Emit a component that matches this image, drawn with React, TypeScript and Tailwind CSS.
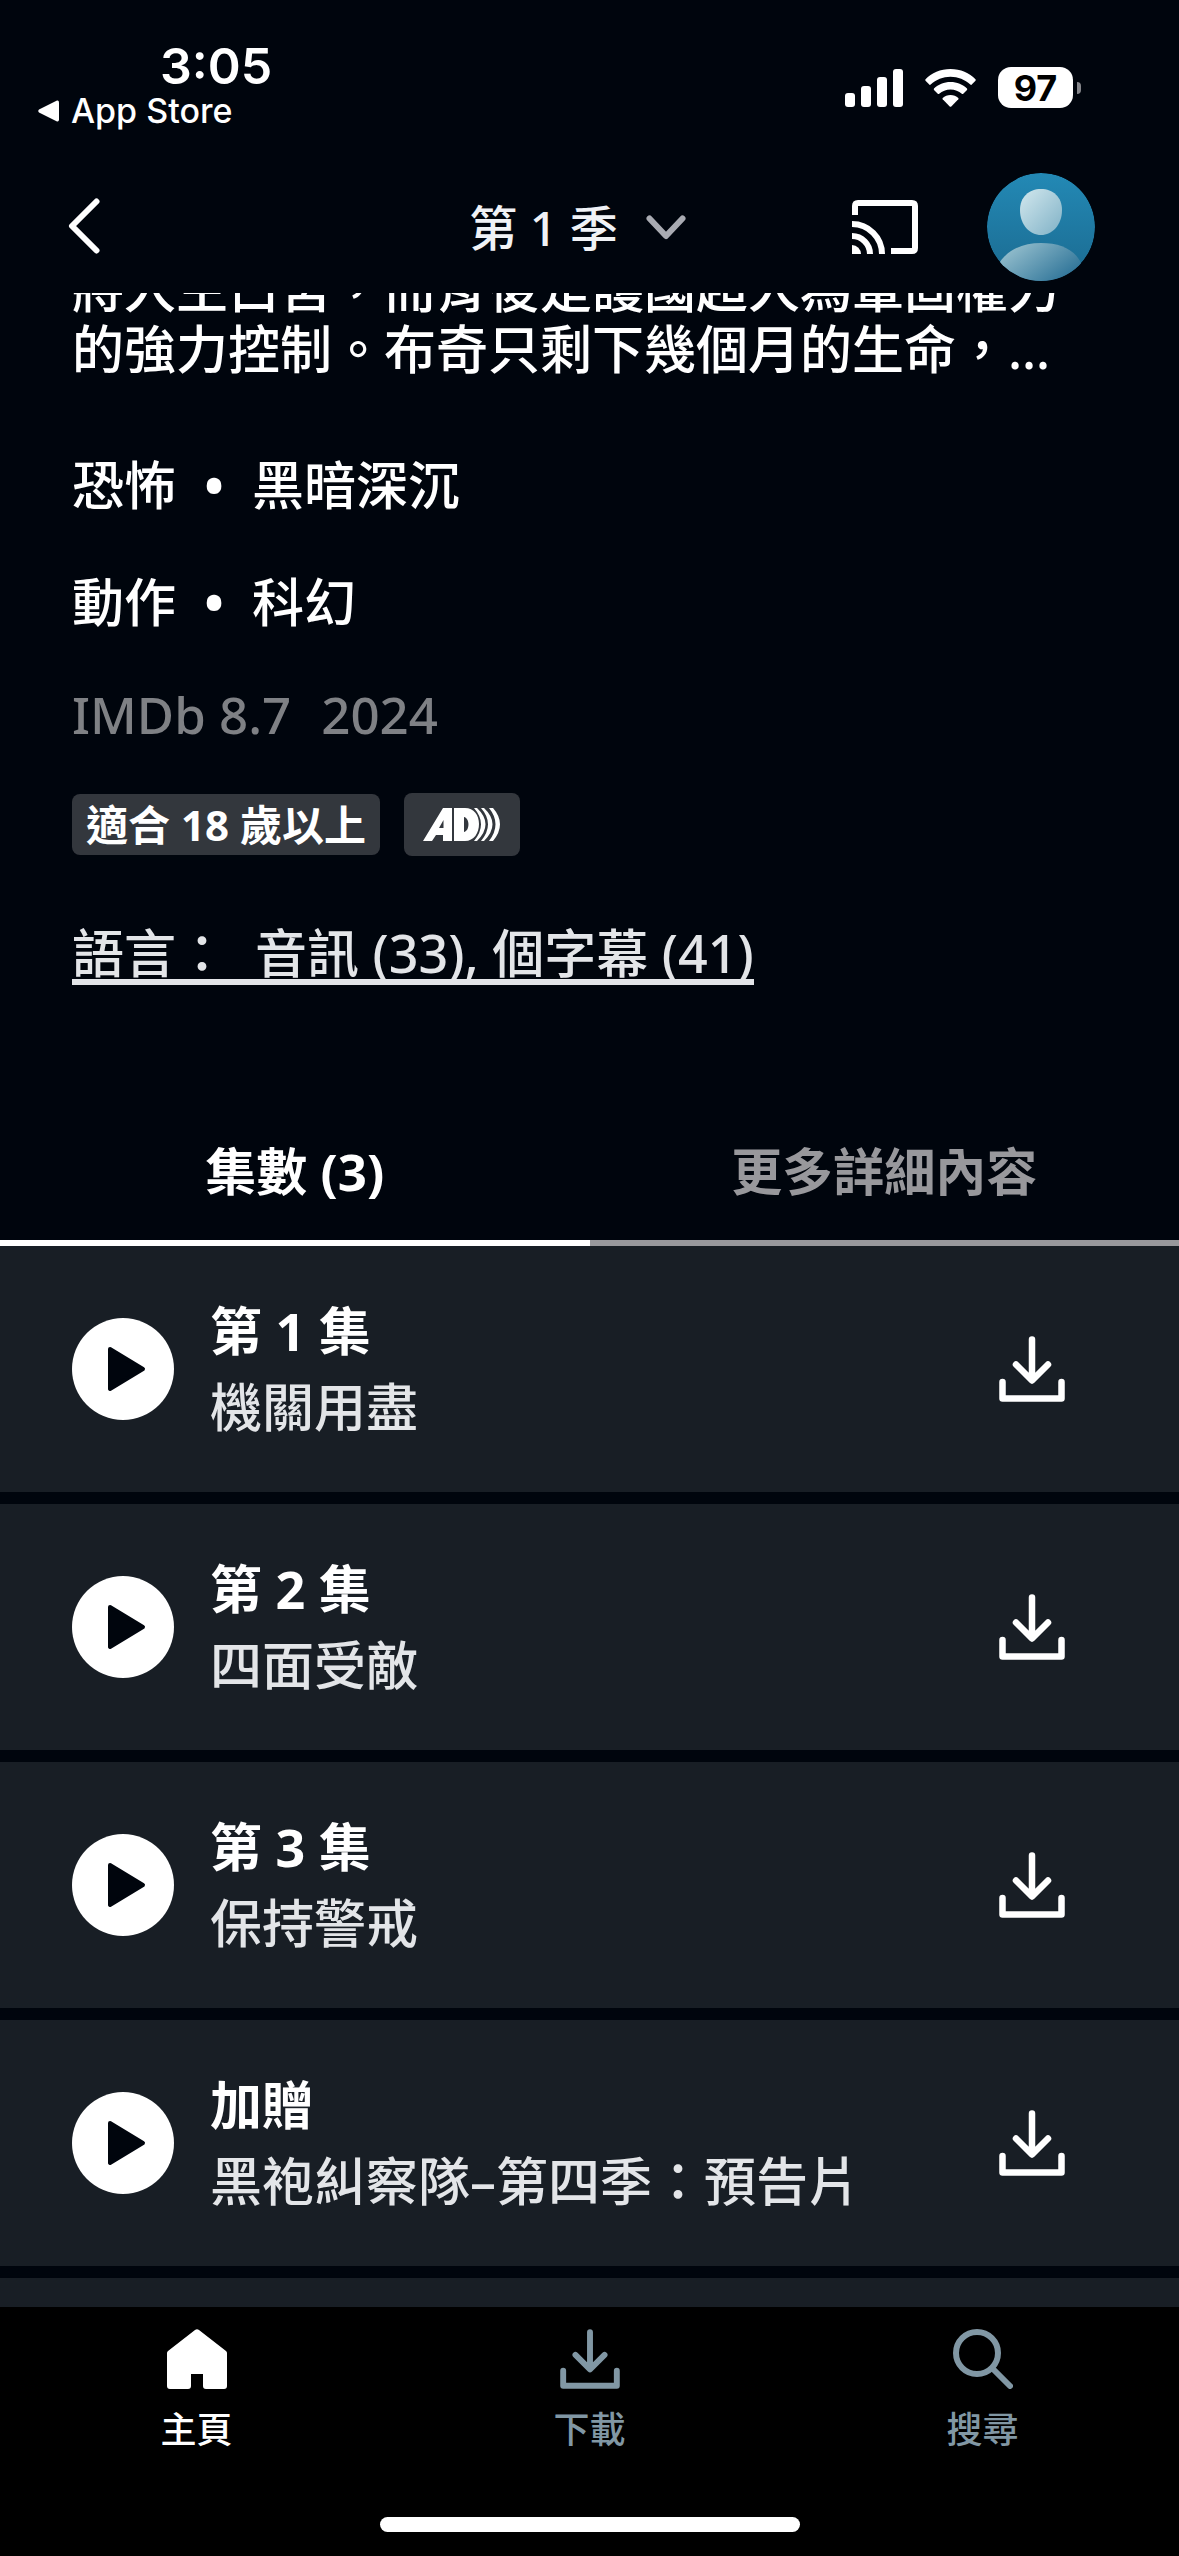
import { useState } from "react";
import type { ReactNode } from "react";

const episodes = [
   { title: "第 1 集", name: "機關用盡" },
   { title: "第 2 集", name: "四面受敵" },
   { title: "第 3 集", name: "保持警戒" },
   { title: "加贈", name: "黑袍糾察隊–第四季：預告片" },
];

const DownloadIcon = ({ className }: { className: string }) => (
   <svg viewBox="0 0 66 66" className={className} fill="none" stroke="currentColor" strokeWidth="6.5" strokeLinecap="round" strokeLinejoin="round" aria-hidden="true">
      <path d="M33 3.500V44M17 28.500L33 44.500L49 28.500M3.500 46V62.500H62.500V46" />
   </svg>
);

const StatusBar = () => (
   <div className="flex h-[168px] shrink-0 items-start justify-between font-['Inter','Noto_Sans_CJK_TC',sans-serif]">
      <div className="pt-[40px] pl-[38px]">
         <p className="pl-[122px] text-[50px] leading-[52px] font-semibold">3:05</p>
         <a href="#app-store" className="flex items-center gap-3 text-[34px] leading-[38px] font-medium">
            <svg viewBox="0 0 21 22" className="h-[22px] w-[21px]" fill="currentColor" aria-hidden="true">
               <path d="M19 .5Q21 0 21 2.500V19.500Q21 22 19 21.500L1 12.500Q-.5 11 1 9.500Z" />
            </svg>
            App Store
         </a>
      </div>
      <div className="flex items-center gap-[22px] pt-[67px] pr-[98px]">
         <svg viewBox="0 0 58 38" className="h-[38px] w-[58px]" fill="currentColor" aria-hidden="true">
            <rect x="0" y="24" width="10" height="14" rx="3" />
            <rect x="16" y="17" width="10" height="21" rx="3" />
            <rect x="32" y="8" width="10" height="30" rx="3" />
            <rect x="48" y="0" width="10" height="38" rx="3" />
         </svg>
         <svg viewBox="0 0 51 38" className="h-[38px] w-[51px]" fill="currentColor" aria-hidden="true">
            <path d="M25.500 0C35.500 0 44.500 4 50.500 10.200Q51 11 50.500 11.700L46.500 15.700Q46 16.100 45.300 15.600C40 10.600 33 7.700 25.500 7.700S11 10.600 5.700 15.600Q5 16.100 4.500 15.700L.5 11.700Q0 11 .5 10.200C6.500 4 15.500 0 25.500 0Z" />
            <path d="M25.500 13C32 13 37.800 15.500 42 19.500Q42.500 20.200 42 20.900L38 24.900Q37.400 25.300 36.800 24.800C33.800 22.100 29.900 20.500 25.500 20.500S17.200 22.100 14.200 24.800Q13.600 25.300 13 24.900L9 20.900Q8.500 20.200 9 19.500C13.200 15.500 19 13 25.500 13Z" />
            <path d="M25.500 26C28.500 26 31.300 27.100 33.300 29Q33.800 29.600 33.300 30.300L26.300 37.400Q25.500 38 24.700 37.400L17.700 30.300Q17.200 29.600 17.700 29C19.700 27.100 22.500 26 25.500 26Z" />
         </svg>
         <div className="flex items-center gap-1">
            <span className="flex h-[41px] w-[75px] items-center justify-center rounded-[13px] bg-white text-[36px] leading-none font-bold text-black">97</span>
            <span className="h-[12px] w-[4px] rounded-r-full bg-[#85868b]" />
         </div>
      </div>
   </div>
);

const NavBar = () => (
   <header className="grid h-[125px] shrink-0 grid-cols-[1fr_auto_1fr] items-start pr-[84px] pl-[60px]">
      <button aria-label="返回" className="mt-[22px] justify-self-start p-2">
         <svg viewBox="0 0 32 56" className="h-[56px] w-[32px]" fill="none" stroke="currentColor" strokeWidth="6" strokeLinecap="round" strokeLinejoin="round" aria-hidden="true">
            <path d="M28.500 3.500L4 28L28.500 52.500" />
         </svg>
      </button>
      <button className="mt-[30px] flex items-center gap-[28px] text-[48px] leading-[60px] font-medium text-[#f0f2f6]">
         第 1 季
         <svg viewBox="0 0 40 26" className="h-[26px] w-[40px] text-[#a9abb2]" fill="none" stroke="currentColor" strokeWidth="6" strokeLinecap="round" strokeLinejoin="round" aria-hidden="true">
            <path d="M3.500 3.500L20 21L36.500 3.500" />
         </svg>
      </button>
      <div className="flex items-center gap-[69px] justify-self-end pt-[5px]">
         <button aria-label="投放">
            <svg viewBox="0 0 66 54" className="h-[54px] w-[66px]" fill="none" stroke="currentColor" strokeWidth="6" aria-hidden="true">
               <path d="M3 15V6Q3 3 6 3H60Q63 3 63 6V48Q63 51 60 51H39" />
               <path d="M0 24A30 30 0 0 1 30 54M0 36A18 18 0 0 1 18 54" />
               <path d="M0 45A9 9 0 0 1 9 54H0Z" fill="currentColor" stroke="none" />
            </svg>
         </button>
         <button aria-label="個人檔案">
            <svg viewBox="0 0 108 108" className="size-[108px]" aria-hidden="true">
               <defs>
                  <linearGradient id="disc" x1="0" y1="0" x2="0" y2="1">
                     <stop offset="0" stopColor="#2389b5" />
                     <stop offset="1" stopColor="#1b6a90" />
                  </linearGradient>
                  <linearGradient id="head" x1="0" y1="0" x2="1" y2="1">
                     <stop offset="0" stopColor="#d3e8ee" />
                     <stop offset="1" stopColor="#7fb1c6" />
                  </linearGradient>
                  <linearGradient id="body" x1="0" y1="0.2" x2="1" y2="0.8">
                     <stop offset="0" stopColor="#9cc4d1" />
                     <stop offset="1" stopColor="#286f95" />
                  </linearGradient>
                  <clipPath id="round"><circle cx="54" cy="54" r="54" /></clipPath>
               </defs>
               <g clipPath="url(#round)">
                  <circle cx="54" cy="54" r="54" fill="url(#disc)" />
                  <path d="M54 16C66 16 75 24 75 37C75 52 65 62 54 62S33 52 33 37C33 24 42 16 54 16Z" fill="url(#head)" />
                  <path d="M10 108V94C18 78 34 70 54 70S88 77 94 90V108Z" fill="url(#body)" />
               </g>
            </svg>
         </button>
      </div>
   </header>
);

const Details = () => (
   <section className="px-[72px] text-[52px] leading-[60px] font-medium">
      {/* The synopsis is scrolled part way under the nav bar */}
      <div className="flex h-[86px] flex-col justify-end overflow-hidden leading-[61px] whitespace-nowrap">
         <p>將入主白宮，而背後是護國超人為鞏固權力</p>
         <p>的強力控制。布奇只剩下幾個月的生命，…</p>
      </div>
      <p className="mt-[76px] flex">恐怖<span className="w-[76px] text-center font-bold">•</span>黑暗深沉</p>
      <p className="mt-[57px] flex">動作<span className="w-[76px] text-center font-bold">•</span>科幻</p>
      <p className="mt-[52px] flex gap-[30px] text-[51px] text-[#7f8185]"><span>IMDb 8.7</span><span>2024</span></p>
      <div className="mt-[49px] flex items-center gap-[24px]">
         <span className="flex h-[61px] items-center rounded-lg bg-[#33373d] px-[14px] text-[42px] font-bold">適合 18 歲以上</span>
         <span className="flex h-[63px] w-[116px] items-center justify-center rounded-lg bg-[#33373d]" role="img" aria-label="口述影像">
            <svg viewBox="0 0 78 33" className="h-[33px] w-[78px]" fill="currentColor" aria-hidden="true">
               <path fillRule="evenodd" d="M0 33L20 0H29V33H20V27H13L9 33ZM16 20H20.500V12Z" />
               <path fillRule="evenodd" d="M31 0H42C51 0 56 7 56 16S51 33 42 33H31ZM41 9V24C47 23 47 10 41 9Z" />
               <path d="M51 0H54Q71 16 54 33H51Q65 16 51 0ZM58 0H61Q78 16 61 33H58Q72 16 58 0ZM66 0H70Q84 16 70 33H66Q79 16 66 0Z" />
            </svg>
         </span>
      </div>
      <a href="#languages" className="mt-[71px] inline-block border-b-[6px] border-[#e3e5e8] leading-[52px] whitespace-pre text-[#e3e5e8]">語言：  音訊 (33), 個字幕 (41)</a>
   </section>
);

const Tabs = () => {
   const [ tab, setTab ] = useState<number>(0);
   return (
      <div role="tablist" className="mt-[114px] grid grid-cols-2 text-[51px] leading-[60px] font-bold">
         {["集數 (3)", "更多詳細內容"].map((name, i) => (
            <button key={name} role="tab" aria-selected={tab === i} onClick={() => { setTab(i) }}
               className={`border-b-[6px] pt-[42px] pb-[39px] ${tab === i ? 'border-white' : 'border-[#98989c] text-[#98989c]'}`}>
               {name}
            </button>
         ))}
      </div>
   )
}

const EpisodeRow = ({ title, name }: { title: string, name: string }) => (
   <li className="flex h-[246px] shrink-0 items-center bg-[#181e25] pr-[114px] pl-[72px]">
      <button aria-label={`播放 ${title}`}>
         <svg viewBox="0 0 102 102" className="size-[102px]" aria-hidden="true">
            <circle cx="51" cy="51" r="51" fill="white" />
            <path d="M38 31L71 51L38 71Z" fill="#00050d" stroke="#00050d" strokeWidth="4" strokeLinejoin="round" />
         </svg>
      </button>
      <div className="grow pl-[36px] text-[52px] leading-[76px]">
         <h3 className="font-bold">{title}</h3>
         <p className="font-medium text-[#e3e5e8]">{name}</p>
      </div>
      <button aria-label={`下載 ${title}`}><DownloadIcon className="size-[66px]" /></button>
   </li>
);

const BottomTab = ({ label, active, children }: { label: string, active?: boolean, children: ReactNode }) => (
   <a href="#tab" className={`flex flex-col items-center gap-[16px] pt-[22px] text-[36px] leading-[50px] font-medium ${active ? 'text-white' : 'text-[#8197a4]'}`}>
      {children}
      {label}
   </a>
);

const App = () => {
   return (
      <div className="flex h-screen flex-col overflow-hidden bg-[#00050d] text-white font-['Noto_Sans','Noto_Sans_CJK_TC',sans-serif]">
         <StatusBar />
         <NavBar />
         <main className="flex min-h-0 grow flex-col overflow-hidden">
            <Details />
            <Tabs />
            <ul className="flex flex-col gap-3">
               {episodes.map((e) => <EpisodeRow key={e.name} title={e.title} name={e.name} />)}
               <li className="h-[246px] shrink-0 bg-[#181e25]"></li>
            </ul>
         </main>
         <nav className="h-[249px] shrink-0 bg-black">
            <div className="grid grid-cols-3">
               <BottomTab label="主頁" active>
                  <svg viewBox="0 0 60 60" className="size-[60px]" fill="currentColor" aria-hidden="true">
                     <path d="M28 1Q30 -.5 32 1L59 22Q60 23 60 24V57Q60 60 57 60H39Q36 60 36 57V45H24V57Q24 60 21 60H3Q0 60 0 57V24Q0 23 1 22Z" />
                  </svg>
               </BottomTab>
               <BottomTab label="下載"><DownloadIcon className="size-[60px]" /></BottomTab>
               <BottomTab label="搜尋">
                  <svg viewBox="0 0 60 60" className="size-[60px]" fill="none" stroke="currentColor" strokeWidth="6" strokeLinecap="round" aria-hidden="true">
                     <circle cx="24" cy="24" r="21" />
                     <path d="M39.500 39.500L57 57" />
                  </svg>
               </BottomTab>
            </div>
            <div className="mx-auto mt-[62px] h-[15px] w-[420px] rounded-full bg-white"></div>
         </nav>
      </div>
   )
}
export default App
